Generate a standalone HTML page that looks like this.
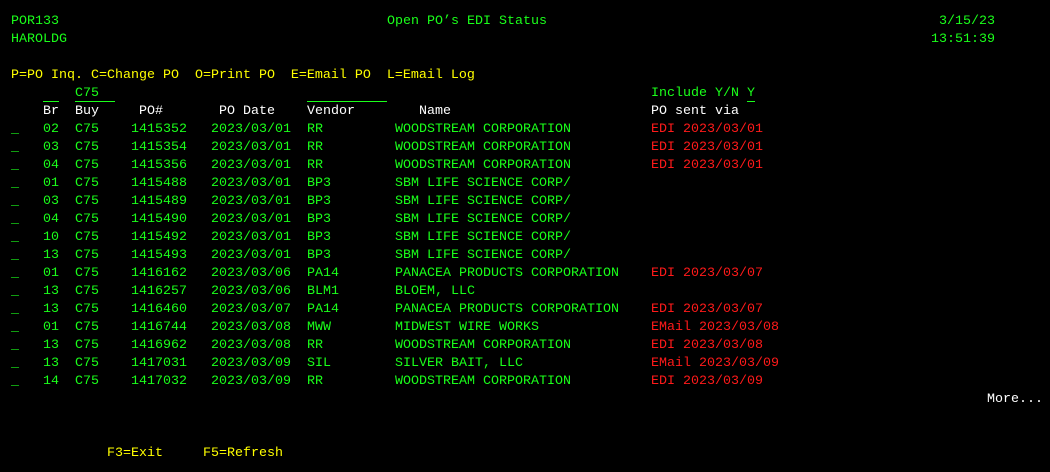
<!DOCTYPE html>
<html><head><meta charset="utf-8"><style>
html,body{margin:0;padding:0;background:#000;width:1050px;height:472px;overflow:hidden}
body{position:relative;font-family:"Liberation Mono",monospace;font-size:13.33px;line-height:18px;color:#1aff1a}
.wrap{position:absolute;left:0;top:2px;width:1050px;height:470px}
.r{position:absolute;left:11px;height:18px;width:1040px;white-space:pre}
.r span{position:absolute;top:0}
.y{color:#ffff00}.w{color:#fff}.g{color:#1aff1a}.red{color:#ff1a1a}
.ul{display:inline-block;height:16px;border-bottom:1px solid #1aff1a}
.a{left:0}.b{left:32px}.c{left:64px}.d{left:120px}.e{left:200px}.f{left:296px}.h{left:384px}.s{left:640px}
</style></head><body><div class="wrap">
<div class="r" style="top:11px"><span class="g" style="left:0">POR133</span><span class="g" style="left:376px">Open PO’s EDI Status</span><span class="g" style="left:928px">3/15/23</span></div>
<div class="r" style="top:29px"><span class="g" style="left:0">HAROLDG</span><span class="g" style="left:920px">13:51:39</span></div>
<div class="r" style="top:65px"><span class="y" style="left:0">P=PO Inq. C=Change PO  O=Print PO  E=Email PO  L=Email Log</span></div>
<div class="r" style="top:83px"><span class="ul" style="left:32px;width:16px"></span><span class="ul g" style="left:64px;width:40px">C75</span><span class="ul" style="left:296px;width:80px"></span><span class="g" style="left:640px">Include Y/N <span class="ul" style="position:static">Y</span></span></div>
<div class="r w" style="top:101px"><span style="left:32px">Br</span><span style="left:64px">Buy</span><span style="left:128px">PO#</span><span style="left:208px">PO Date</span><span style="left:296px">Vendor</span><span style="left:408px">Name</span><span style="left:640px">PO sent via</span></div>

<div class="r" style="top:119px"><span class="a">_</span><span class="b">02</span><span class="c">C75</span><span class="d">1415352</span><span class="e">2023/03/01</span><span class="f">RR</span><span class="h">WOODSTREAM CORPORATION</span><span class="s red">EDI 2023/03/01</span></div>
<div class="r" style="top:137px"><span class="a">_</span><span class="b">03</span><span class="c">C75</span><span class="d">1415354</span><span class="e">2023/03/01</span><span class="f">RR</span><span class="h">WOODSTREAM CORPORATION</span><span class="s red">EDI 2023/03/01</span></div>
<div class="r" style="top:155px"><span class="a">_</span><span class="b">04</span><span class="c">C75</span><span class="d">1415356</span><span class="e">2023/03/01</span><span class="f">RR</span><span class="h">WOODSTREAM CORPORATION</span><span class="s red">EDI 2023/03/01</span></div>
<div class="r" style="top:173px"><span class="a">_</span><span class="b">01</span><span class="c">C75</span><span class="d">1415488</span><span class="e">2023/03/01</span><span class="f">BP3</span><span class="h">SBM LIFE SCIENCE CORP/</span></div>
<div class="r" style="top:191px"><span class="a">_</span><span class="b">03</span><span class="c">C75</span><span class="d">1415489</span><span class="e">2023/03/01</span><span class="f">BP3</span><span class="h">SBM LIFE SCIENCE CORP/</span></div>
<div class="r" style="top:209px"><span class="a">_</span><span class="b">04</span><span class="c">C75</span><span class="d">1415490</span><span class="e">2023/03/01</span><span class="f">BP3</span><span class="h">SBM LIFE SCIENCE CORP/</span></div>
<div class="r" style="top:227px"><span class="a">_</span><span class="b">10</span><span class="c">C75</span><span class="d">1415492</span><span class="e">2023/03/01</span><span class="f">BP3</span><span class="h">SBM LIFE SCIENCE CORP/</span></div>
<div class="r" style="top:245px"><span class="a">_</span><span class="b">13</span><span class="c">C75</span><span class="d">1415493</span><span class="e">2023/03/01</span><span class="f">BP3</span><span class="h">SBM LIFE SCIENCE CORP/</span></div>
<div class="r" style="top:263px"><span class="a">_</span><span class="b">01</span><span class="c">C75</span><span class="d">1416162</span><span class="e">2023/03/06</span><span class="f">PA14</span><span class="h">PANACEA PRODUCTS CORPORATION</span><span class="s red">EDI 2023/03/07</span></div>
<div class="r" style="top:281px"><span class="a">_</span><span class="b">13</span><span class="c">C75</span><span class="d">1416257</span><span class="e">2023/03/06</span><span class="f">BLM1</span><span class="h">BLOEM, LLC</span></div>
<div class="r" style="top:299px"><span class="a">_</span><span class="b">13</span><span class="c">C75</span><span class="d">1416460</span><span class="e">2023/03/07</span><span class="f">PA14</span><span class="h">PANACEA PRODUCTS CORPORATION</span><span class="s red">EDI 2023/03/07</span></div>
<div class="r" style="top:317px"><span class="a">_</span><span class="b">01</span><span class="c">C75</span><span class="d">1416744</span><span class="e">2023/03/08</span><span class="f">MWW</span><span class="h">MIDWEST WIRE WORKS</span><span class="s red">EMail 2023/03/08</span></div>
<div class="r" style="top:335px"><span class="a">_</span><span class="b">13</span><span class="c">C75</span><span class="d">1416962</span><span class="e">2023/03/08</span><span class="f">RR</span><span class="h">WOODSTREAM CORPORATION</span><span class="s red">EDI 2023/03/08</span></div>
<div class="r" style="top:353px"><span class="a">_</span><span class="b">13</span><span class="c">C75</span><span class="d">1417031</span><span class="e">2023/03/09</span><span class="f">SIL</span><span class="h">SILVER BAIT, LLC</span><span class="s red">EMail 2023/03/09</span></div>
<div class="r" style="top:371px"><span class="a">_</span><span class="b">14</span><span class="c">C75</span><span class="d">1417032</span><span class="e">2023/03/09</span><span class="f">RR</span><span class="h">WOODSTREAM CORPORATION</span><span class="s red">EDI 2023/03/09</span></div>
<div class="r w" style="top:389px"><span style="left:976px">More...</span></div>
<div class="r y" style="top:443px"><span style="left:96px">F3=Exit</span><span style="left:192px">F5=Refresh</span></div>
</div></body></html>
